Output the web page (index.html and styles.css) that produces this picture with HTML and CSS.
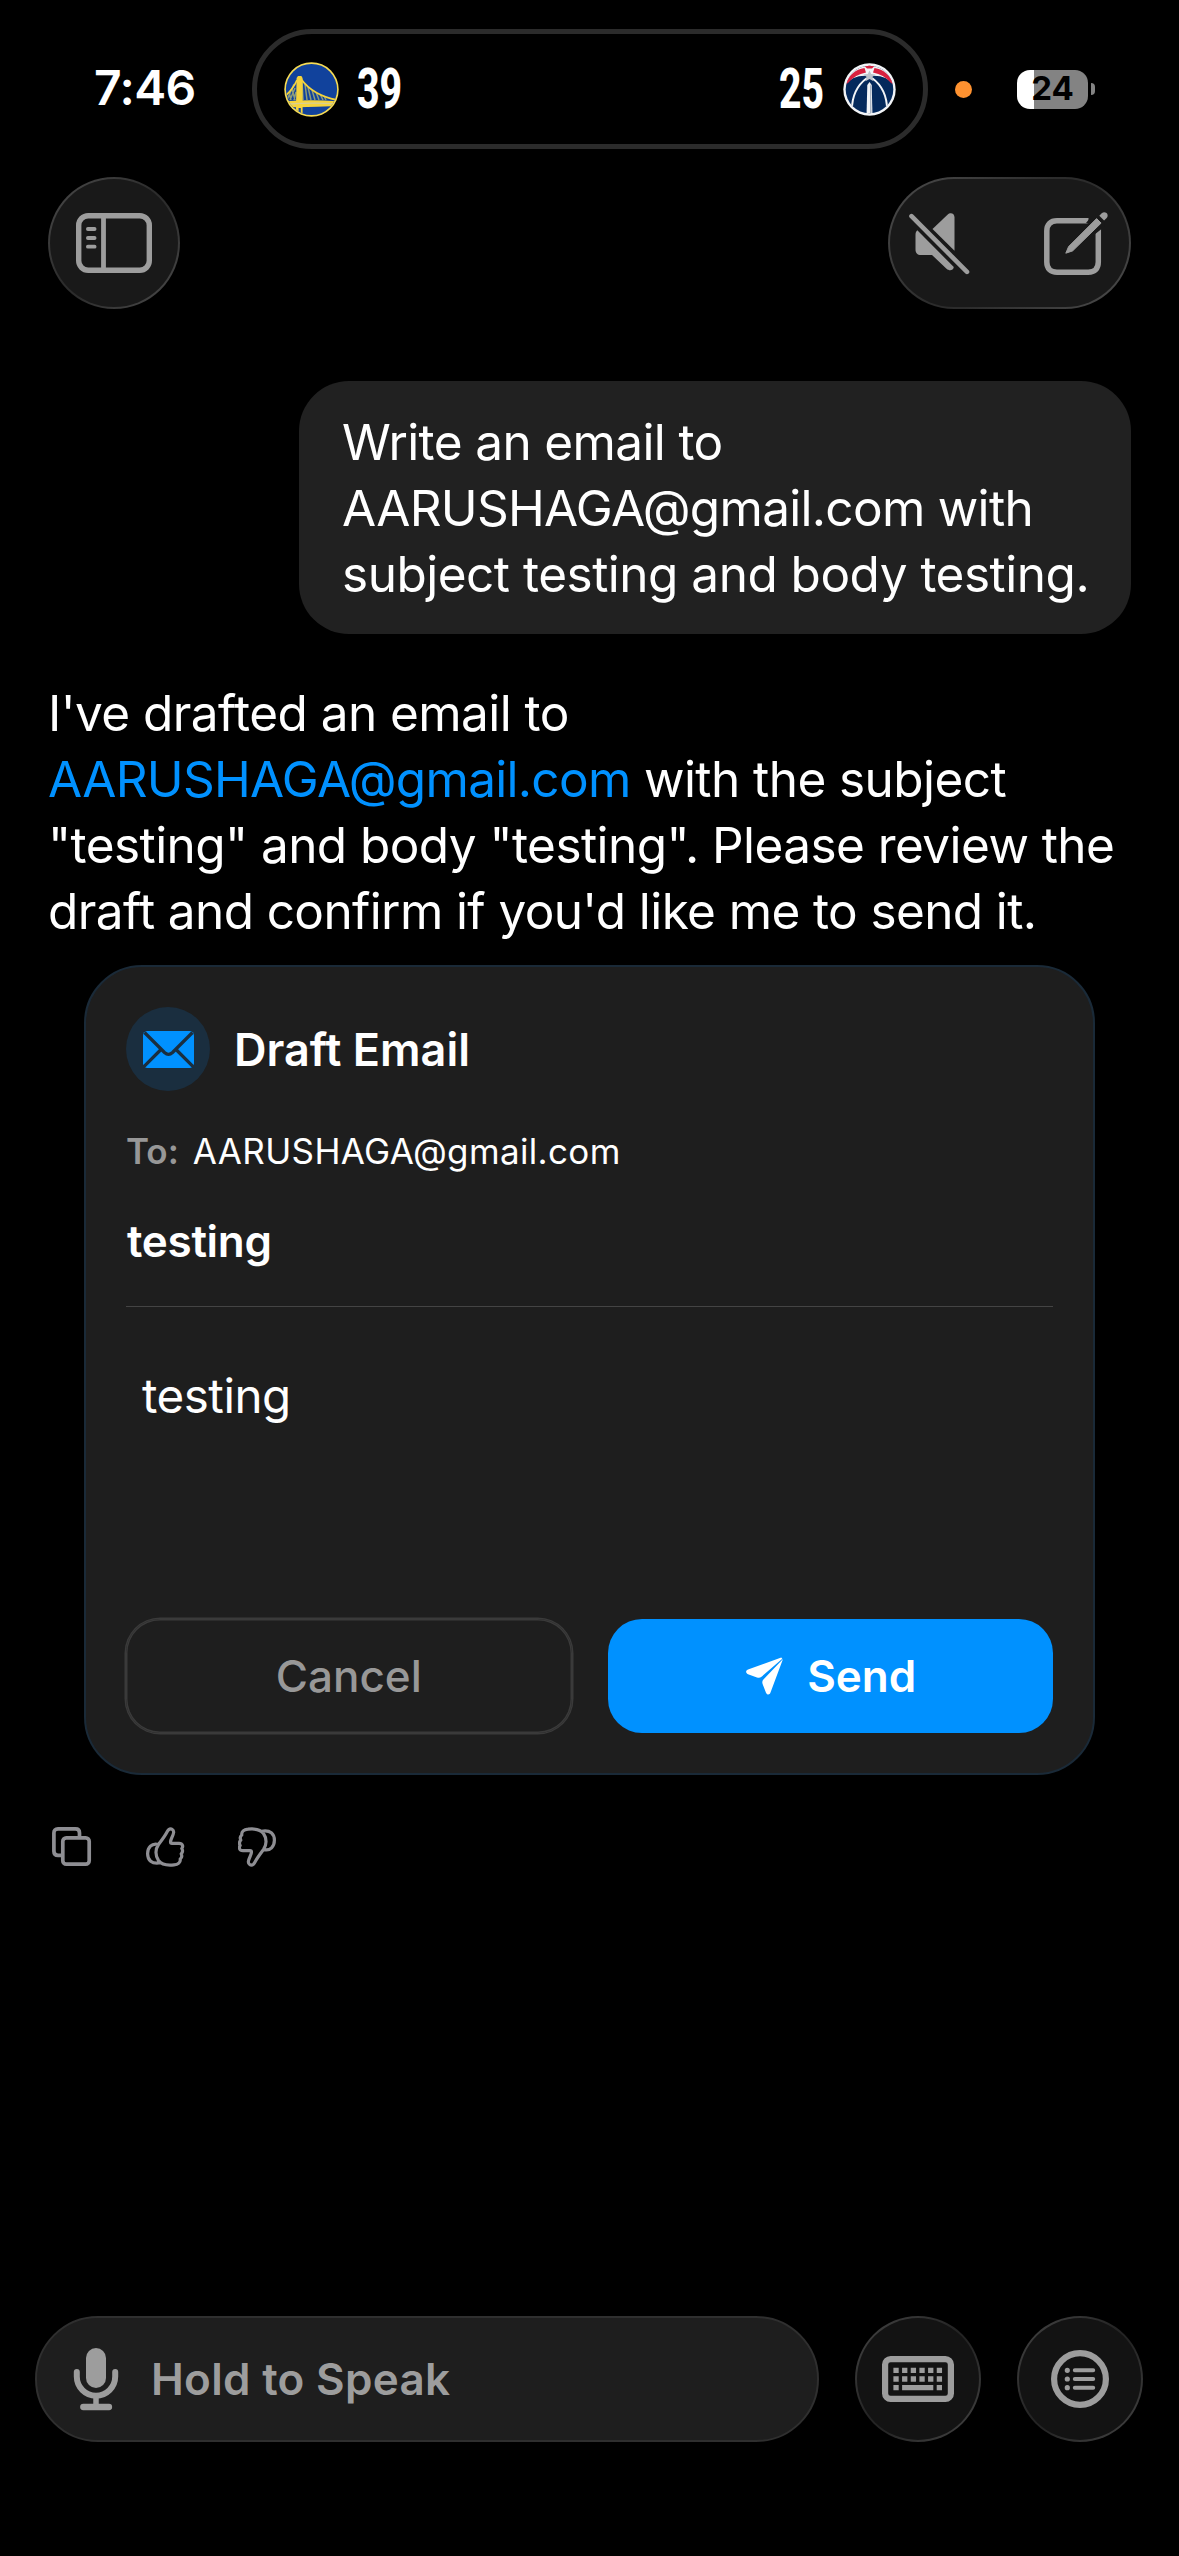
FILE: index.html
```html
<!DOCTYPE html>
<html lang="en">
<head>
<meta charset="utf-8">
<title>Assistant – Draft Email</title>
<link rel="stylesheet" href="styles.css">
</head>
<body>
<div class="screen">
  <div class="status">
    <div class="clock">7:46</div>
    <div class="island">
      <svg class="team-logo" width="55" height="55" viewBox="0 0 55 55">
        <defs><clipPath id="disc"><circle cx="27.5" cy="27.5" r="25.5"/></clipPath></defs>
        <circle cx="27.5" cy="27.5" r="27.2" fill="#f7dc55"/>
        <circle cx="27.5" cy="27.5" r="25.6" fill="#11429c"/>
        <g clip-path="url(#disc)">
          <path d="M10 22 L3 38 M11 26 L6 38 M12 30 L10 38 M18 19 L19 38 M21 22 L23 38 M24 25 L27 38 M28 28 L31 38 M32 30 L35 38 M36 32 L39 38 M40 34 L42 38 M8 27 L11 38 M5 30 L7 38" stroke="#8e9c78" stroke-width="1.5" fill="none"/>
          <path d="M13 18 C10 25 6 30 0 35 M17 17 C25 28 38 35 53 38" stroke="#f5d33c" stroke-width="1.8" fill="none"/>
          <path d="M12.6 16 L14 14 H17.4 L18.6 16 V53 H16.8 V46 H14.6 V53 H11.8Z" fill="#f5d33c"/>
          <path d="M0 39.5 Q27 37 55 39.5 V44 Q27 45.5 0 45Z" fill="#f5d33c"/>
          <path d="M3 42.2 Q27 40.4 52 41.8" stroke="#d8cf94" stroke-width="1.2" fill="none"/>
        </g>
      </svg>
      <span class="score"><span class="score-text">39</span></span>
      <span class="island-gap"></span>
      <span class="score"><span class="score-text">25</span></span>
      <svg class="team-logo away" width="53" height="53" viewBox="0 0 53 53">
        <defs><clipPath id="ball"><circle cx="26.5" cy="26.5" r="23.8"/></clipPath></defs>
        <circle cx="26.5" cy="26.5" r="26.2" fill="#f2f4f7"/>
        <g clip-path="url(#ball)">
          <rect width="53" height="53" fill="#04295c"/>
          <path d="M0 25 Q8 11 26.500 13 Q45 11 53 25 V0 H0Z" fill="#f2f4f7"/>
          <path d="M2 21.500 Q8 7 21.500 5 L23 9.500 Q12 11.500 5 20Z M51 21.500 Q45 7 31.500 5 L30 9.500 Q41 11.500 48 20Z M20 1.500 L24 5.500 H29 L33 1.500Z" fill="#d8203f"/>
          <path d="M24 15 C13 23 8 34 9 51 M29 15 C40 23 45 34 44 51" stroke="#f2f4f7" stroke-width="2" fill="none"/>
          <path d="M26.500 19 L28.700 22 L29.500 53 H23.500 L24.300 22Z" fill="#f2f4f7"/>
          <path d="M27 21 L28 23 L28.600 53 H27Z" fill="#aab4c2"/>
          <path d="M26.500 7.500 L28.200 11 L32.500 11.400 L29.300 14 L30.500 18.300 L26.500 16 L22.500 18.300 L23.700 14 L20.500 11.400 L24.800 11Z" fill="#bcc3cb"/>
        </g>
      </svg>
    </div>
    <span class="mic-dot"></span>
    <div class="battery"><span class="battery-level">24</span></div>
    <span class="battery-nub"></span>
  </div>

  <div class="toolbar">
    <div class="glass round-button">
      <svg width="76" height="60" viewBox="0 0 76 60" fill="none" stroke="#9d9d9d">
        <rect x="2.700" y="2.700" width="70.600" height="54.600" rx="9.500" stroke-width="5.400"/>
        <path d="M27.500 3 V57" stroke-width="4.800"/>
        <path d="M11.900 16 H18.600 M11.900 25 H18.600 M11.900 33.700 H18.600" stroke-width="3.800" stroke-linecap="round"/>
      </svg>
    </div>
    <div class="glass tool-pill">
      <svg width="70" height="72" viewBox="0 0 70 72" fill="#9d9d9d">
        <path d="M6.500 9.200 L62 64.900" stroke="#9d9d9d" stroke-width="4.600" stroke-linecap="round"/>
        <path d="M27.500 22 L42.500 7.800 C45.500 5 49.500 6.500 49.500 10.500 V43.800Z"/>
        <path d="M12.300 23.300 L48.800 60 C48.200 63.500 44.500 64.200 41.500 61.700 L27 48 H16 C12.300 48 10.500 46 10.500 42.500 V28 C10.500 26 11 24.500 12.300 23.300Z"/>
      </svg>
      <svg width="72" height="72" viewBox="0 0 72 72">
        <path d="M48.500 13.700 H17 C10.500 13.700 6.800 17.400 6.800 24 V55 C6.800 61.500 10.500 65.200 17 65.200 H48.200 C54.800 65.200 58.300 61.500 58.300 55 V22" fill="none" stroke="#9d9d9d" stroke-width="5.500"/>
        <path d="M24 47.500 L52 18 L46 16 L54 6 L66 6 L64 20 L54 28 L34 50Z" fill="#191919"/>
        <path d="M25.800 46.200 L28.600 39.600 L56.600 11.600 L61.100 16.100 L32.600 43.900Z" fill="#9d9d9d" stroke="#9d9d9d" stroke-linejoin="round"/>
        <path d="M59.300 8.700 L61.700 6.200 C65.500 3.500 69.500 7.500 66.700 11 L64.100 13.500Z" fill="#9d9d9d"/>
      </svg>
    </div>
  </div>

  <div class="user-message">
    <span class="line l1">Write an email to</span>
    <span class="line l2">AARUSHAGA@gmail.com with</span>
    <span class="line l3">subject testing and body testing.</span>
  </div>

  <div class="reply">
    <span class="line">I've drafted an email to</span>
    <span class="line"><a class="mail-link">AARUSHAGA@gmail.com</a> with the subject</span>
    <span class="line">"testing" and body "testing". Please review the</span>
    <span class="line l4">draft and confirm if you'd like me to send it.</span>
  </div>

  <div class="card">
    <div class="card-head">
      <div class="mail-badge">
        <svg width="51" height="37" viewBox="0 0 51 37">
          <rect width="51" height="37" rx="4.500" fill="#0091ff"/>
          <path d="M1.500 1.500 L21.500 21.500 Q25.500 25.300 29.500 21.500 L49.500 1.500 M0 36.500 L18 18.500 M51 36.500 L33 18.500" fill="none" stroke="#1a2e3f" stroke-width="3.200"/>
        </svg>
      </div>
      <div class="card-title">Draft Email</div>
    </div>
    <div class="to-row"><span class="to-label">To:</span><span class="to-value">AARUSHAGA@gmail.com</span></div>
    <div class="subject">testing</div>
    <div class="mail-body">testing</div>
    <div class="card-actions">
      <div class="button cancel">Cancel</div>
      <div class="button send">
        <svg width="38" height="38" viewBox="0 0 38 38" fill="#fff">
          <path d="M35.300 .5 L2 12.500 C-.5 13.500 -.5 16 2 17.200 L11 20.500 Q13.500 21.500 15.500 19.800 L36.300 1.800 Z"/>
          <path d="M37 2 L24.500 35.500 C23.500 38.200 21 38 20 35.700 L16.600 27 Q15.700 24.500 17.400 22.500Z"/>
        </svg>
        <span>Send</span>
      </div>
    </div>
  </div>

  <div class="feedback">
    <svg width="40" height="40" viewBox="0 0 40 40" fill="none" stroke="#8e8e93" stroke-width="3.700">
      <rect x="10.800" y="10.800" width="26.400" height="26.400" rx="3.500"/>
      <path d="M10 28.300 H6 C3.200 28.300 1.900 27 1.900 24.300 V6 C1.900 3.300 3.200 1.900 6 1.900 H23.500 C26.200 1.900 27.500 3.300 27.500 6 V10"/>
    </svg>
    <svg width="40" height="40" viewBox="0 0 40 40" fill="none" stroke="#8e8e93" stroke-width="3.200" stroke-linejoin="round">
      <path id="thumb" d="M23.600 2.800 C26 .8 29 2.600 28.600 5.600 C28.200 9 25.500 12 25.500 15 C25.500 16 26 16.300 27 16.300 H34 C38 16.300 38.300 19.800 36.800 21.500 C38 23.500 37.500 25.500 36.200 26.800 C37.200 29 36.500 31 35.200 32 C35.800 35.500 33 37.500 29 37.800 C22 38.600 16.500 37.500 13.500 33.500 C10 28.500 10.300 22 13.500 17.500 C16.500 13.500 20 9 22 5 Q22.700 3.600 23.600 2.800Z M13.500 17.500 C6.500 15.500 2.600 21 2.600 26.700 C2.600 33 6.500 37.500 15.500 35.800"/>
    </svg>
    <svg width="40" height="40" viewBox="0 0 40 40" fill="none" stroke="#8e8e93" stroke-width="3.200" stroke-linejoin="round">
      <use href="#thumb" transform="rotate(180 19.500 20)"/>
    </svg>
  </div>

  <div class="dock">
    <div class="speak">
      <svg width="46" height="64" viewBox="0 0 46 64" fill="none" stroke="#9d9d9d" stroke-linecap="round">
        <rect x="13" y="1" width="20" height="40" rx="10" fill="#9d9d9d" stroke="none"/>
        <path d="M3.800 25 V29.500 A19.200 19.200 0 0 0 42.200 29.500 V25" stroke-width="6"/>
        <path d="M23 50 V59" stroke-width="5.500"/>
        <path d="M10.300 60 H36" stroke-width="6.300"/>
      </svg>
      <span>Hold to Speak</span>
    </div>
    <div class="glass dock-button">
      <svg width="72" height="46" viewBox="0 0 72 46" fill="none" stroke="#9d9d9d">
        <rect x="3.100" y="3.100" width="65.800" height="39.800" rx="5.500" stroke-width="6.200"/>
        <path d="M11.400 14.300 H60.400 M11.400 23 H60.400" stroke-width="5.300" stroke-dasharray="5.300 3.370"/>
        <path d="M11.400 31.700 H16.700 M54.700 31.700 H60 M20.100 31.700 H51.300" stroke-width="5.300"/>
      </svg>
    </div>
    <div class="glass dock-button">
      <svg width="58" height="58" viewBox="0 0 58 58" fill="none" stroke="#9d9d9d" stroke-linecap="round">
        <circle cx="29" cy="29" r="25.900" stroke-width="6.200"/>
        <path d="M23.800 20.300 H42.200 M23.800 29 H42.200 M23.800 37.700 H42.200" stroke-width="4"/>
        <path d="M16.300 20.300 h.01 M16.300 29 h.01 M16.300 37.700 h.01" stroke-width="5.200"/>
      </svg>
    </div>
  </div>
</div>
</body>
</html>
```
FILE: styles.css
```css
* { box-sizing: border-box; }

body {
  margin: 0;
  background: #000;
  color: #fff;
  font-family: Inter, "Liberation Sans", sans-serif;
}

svg { display: block; flex: none; }

.screen {
  display: flex;
  flex-direction: column;
  width: 1179px;
  height: 2556px;
  overflow: hidden;
}

/* Status bar */
.status {
  display: flex;
  align-items: center;
  height: 149px;
  padding-top: 29px;
}
.clock {
  width: 252px;
  padding-left: 94px;
  font-size: 48px;
  font-weight: 600;
  line-height: 58px;
  letter-spacing: -0.6px;
  white-space: nowrap;
  padding-bottom: 2px;
}
.island {
  display: flex;
  align-items: center;
  width: 676px;
  height: 120px;
  padding: 0 27px;
  border: 5px solid #2b2b2b;
  border-radius: 60px;
}
.island-gap { flex: 1; }
.score {
  width: 46px;
  margin-left: 18px;
}
.score-text {
  display: inline-block;
  font-family: Roboto, sans-serif;
  font-size: 55px;
  font-weight: 800;
  line-height: 60px;
  transform: scaleX(0.71);
  transform-origin: left;
}
.team-logo.away { margin-left: 18px; }
.mic-dot {
  width: 17px;
  height: 17px;
  margin-left: 27px;
  border-radius: 50%;
  background: #ff9230;
}
.battery {
  display: flex;
  align-items: center;
  justify-content: center;
  width: 71px;
  height: 39px;
  margin-left: 45px;
  border-radius: 13px;
  background: linear-gradient(90deg, #fff 17px, #838383 17px);
}
.battery-level {
  color: #000;
  font-size: 33px;
  font-weight: 700;
  line-height: 37px;
  padding-bottom: 2px;
}
.battery-nub {
  width: 4px;
  height: 12px;
  margin-left: 3px;
  border-radius: 0 4px 4px 0;
  background: #838383;
}

/* Translucent controls with a lit rim */
.glass {
  display: flex;
  align-items: center;
  border: 2px solid transparent;
  background:
    linear-gradient(#191919, #191919) padding-box,
    linear-gradient(135deg, #4c4c4c, #2c2c2c 45%, #2c2c2c 55%, #4c4c4c) border-box;
}

.toolbar {
  display: flex;
  justify-content: space-between;
  margin: 28px 48px 0;
}
.round-button {
  justify-content: center;
  width: 132px;
  height: 132px;
  border-radius: 50%;
}
.tool-pill {
  gap: 65px;
  width: 243px;
  height: 132px;
  padding-left: 15px;
  border-radius: 66px;
}

/* Conversation */
.line {
  display: block;
  white-space: nowrap;
}
.user-message {
  align-self: flex-end;
  width: 832px;
  height: 253px;
  margin: 72px 48px 0 0;
  padding: 28px 0 0 43px;
  border-radius: 50px;
  background: #212121;
  font-size: 49.5px;
  line-height: 66px;
}
.l1 { letter-spacing: -0.63px; }
.l2 { letter-spacing: -0.7px; }
.l3 { letter-spacing: -0.5px; }
.reply {
  margin: 46px 0 0 48px;
  font-size: 49.5px;
  line-height: 66px;
  letter-spacing: -0.56px;
}
.reply .l4 { letter-spacing: -0.61px; }
.mail-link {
  color: #0091ff;
  letter-spacing: -0.7px;
}

/* Draft card */
.card {
  width: 1011px;
  height: 810px;
  margin: 21px 0 0 84px;
  padding: 40px;
  border: 2px solid #1a2a38;
  border-radius: 58px;
  background: #1e1e1e;
}
.card-head {
  display: flex;
  align-items: center;
  gap: 24px;
}
.mail-badge {
  display: flex;
  align-items: center;
  justify-content: center;
  width: 84px;
  height: 84px;
  border-radius: 50%;
  background: #1a2e3f;
}
.card-title {
  font-size: 45px;
  font-weight: 600;
}
.to-row {
  display: flex;
  gap: 14px;
  height: 44px;
  margin-top: 38px;
  font-size: 35px;
  line-height: 44px;
}
.to-label {
  color: #979797;
  font-weight: 600;
}
.to-value { letter-spacing: 0.34px; }
.subject {
  height: 93px;
  margin-top: 41px;
  padding-left: 1px;
  border-bottom: 1px solid #444;
  font-size: 44px;
  font-weight: 600;
  line-height: 54px;
  letter-spacing: -0.3px;
}
.mail-body {
  height: 312px;
  padding: 59px 0 0 16px;
  font-size: 47.5px;
  line-height: 60px;
  letter-spacing: -0.5px;
}
.card-actions {
  display: grid;
  grid-template-columns: 1fr 1fr;
  gap: 36px;
  height: 114px;
}
.button {
  display: flex;
  align-items: center;
  justify-content: center;
  gap: 23px;
  border-radius: 34px;
  font-size: 44px;
  line-height: 54px;
}
.cancel {
  color: #989898;
  font-weight: 500;
  box-shadow: 0 0 0 1.5px #3a3a3a, inset 0 0 0 1.5px #3a3a3a;
}
.send {
  padding-left: 2px;
  background: #0091ff;
  font-weight: 600;
}

.feedback {
  display: flex;
  gap: 53px;
  margin: 52px 0 0 52px;
}

/* Input dock */
.dock {
  display: flex;
  gap: 36px;
  margin: auto 36px 114px 35px;
}
.speak {
  display: flex;
  align-items: center;
  gap: 32px;
  flex: 1;
  height: 126px;
  padding-left: 36px;
  border: 2px solid #2f2f2f;
  border-radius: 63px;
  background: #1e1e1e;
  color: #9d9d9d;
  font-size: 44px;
  font-weight: 600;
  letter-spacing: 0.3px;
}
.dock-button {
  justify-content: center;
  width: 126px;
  height: 126px;
  border-radius: 50%;
  background:
    linear-gradient(#131313, #131313) padding-box,
    linear-gradient(135deg, #464646, #242424 45%, #242424 55%, #464646) border-box;
}
```
